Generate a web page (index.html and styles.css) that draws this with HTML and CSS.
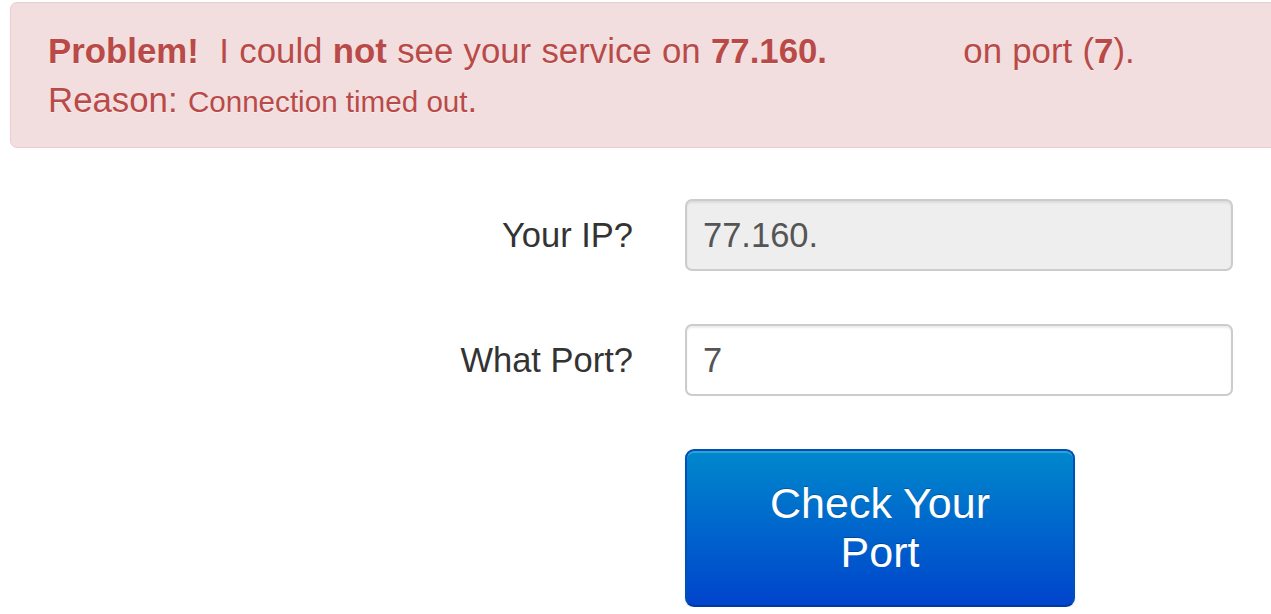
FILE: index.html
```html
<!DOCTYPE html>
<html lang="en">
<head>
  <meta charset="UTF-8">
  <title>Port Check</title>
  <link rel="stylesheet" href="styles.css">
</head>
<body>
  <div class="page">
    <div class="alert alert-error">
      <div><strong>Problem!</strong>&nbsp; I could <strong>not</strong> see your service on <strong>77.160.<span class="redacted"></span></strong> on port (<strong>7</strong>).</div>
      <div>Reason: <span class="reason">Connection timed out</span>.</div>
    </div>

    <form class="check-form">
      <label class="form-label" for="ip">Your IP?</label>
      <input class="form-input" id="ip" value="77.160." disabled>

      <label class="form-label" for="port">What Port?</label>
      <input class="form-input" id="port" value="7">

      <div class="form-actions">
        <button class="btn btn-primary" type="submit">Check Your Port</button>
      </div>
    </form>
  </div>
</body>
</html>
```

FILE: styles.css
```css
html, body { margin:0; background:#fff; }
body { font-family:"Liberation Sans", Arial, sans-serif; color:#333; }
.page { overflow:hidden; }

/* alert */
.alert { margin:2px -30px 0 10px; padding:23px 60px 21px 37px; line-height:49px; font-size:34.8px; word-spacing:0.6px; border:1px solid #ebccd1; border-radius:7px; background:#f2dede; color:#b94a48; text-shadow:0 1px 0 rgba(255,255,255,.5); }
.alert strong { font-weight:bold; }
.alert .redacted { display:inline-block; width:126px; }
.alert .reason { font-size:29.6px; word-spacing:0; }

/* form */
.check-form { display:grid; grid-template-columns:633px 548px; column-gap:52px; row-gap:53px; margin-top:51px; align-items:center; }
.form-label { text-align:right; font-size:34.5px; color:#333; }
.form-input { box-sizing:border-box; height:72px; width:100%; margin:0; padding:0 16px; font:34.5px "Liberation Sans", Arial, sans-serif; color:#555; background:#fff; border:2px solid #ccc; border-radius:7px; box-shadow:inset 0 2px 2px rgba(0,0,0,.075); outline:none; }
.form-input:disabled { background:#eee; color:#555; -webkit-text-fill-color:#555; opacity:1; }
.form-actions { grid-column:2; }

/* button */
.btn { box-sizing:border-box; width:390px; height:158px; padding:0 50px; font:43px/49px "Liberation Sans", Arial, sans-serif; text-align:center; cursor:pointer; border-radius:9px; }
.btn-primary { color:#fff; text-shadow:0 -1px 0 rgba(0,0,0,.25); background:linear-gradient(to bottom, #0088cc, #0044cc); border:2px solid #0050b8; border-bottom-color:#003a9e; box-shadow:inset 0 2px 0 rgba(255,255,255,.2), 0 2px 3px rgba(0,0,0,.08); }
```
